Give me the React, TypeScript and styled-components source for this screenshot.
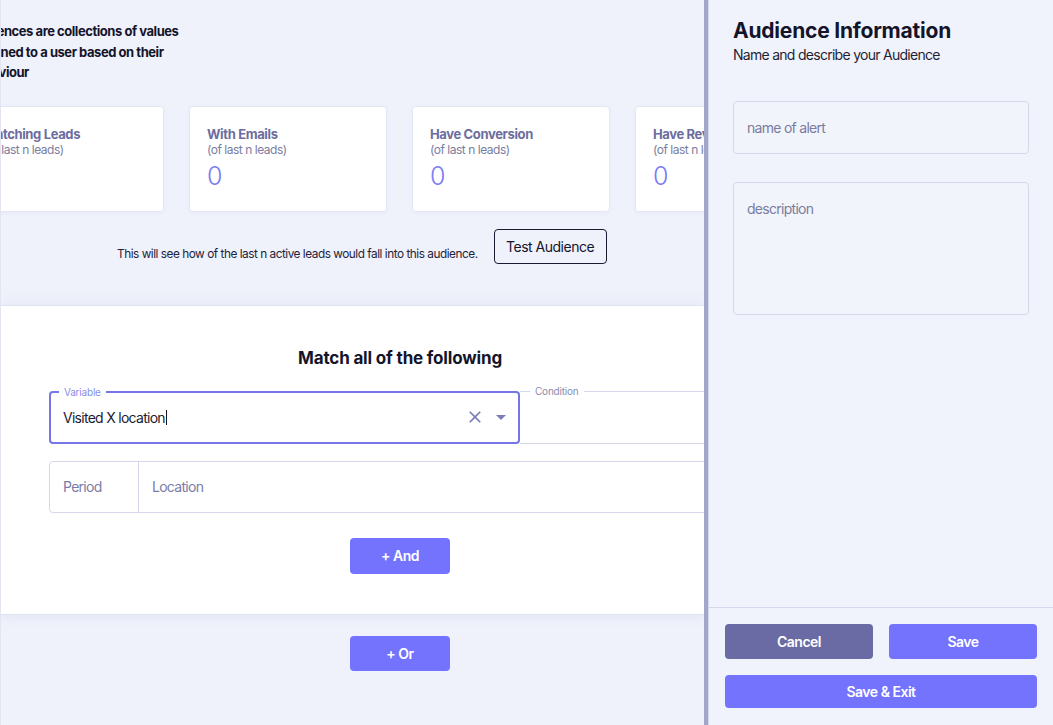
import React from "react";
import styled, { createGlobalStyle } from "styled-components";

const Global = createGlobalStyle`
  html, body, #root { margin: 0; padding: 0; height: 100%; }
  body {
    font-family: Inter, "Noto Sans", "Liberation Sans", sans-serif;
    background: #eff1fb;
    overflow: hidden;
    color: #14142b;
    letter-spacing: -0.045em;
  }
  * { box-sizing: border-box; }
`;

const Page = styled.div`
  display: flex;
  width: 1053px;
  height: 725px;
`;

const Main = styled.main`
  width: 704px;
  flex: none;
  height: 100%;
  overflow: hidden;
  display: flex;
  flex-direction: column;
  background: #eff1fb;
  border-left: 1px solid #e3e6f1;
`;

/* inner content is wider than the visible area and scrolled sideways */
const Inner = styled.div`
  width: 868px;
  margin-left: -35px;
  flex: none;
`;

const TopSection = styled.section`
  padding: 21px 0 41px;
`;

const Intro = styled.p`
  margin: 0 0 0 3px;
  font-size: 13px;
  font-weight: 700;
  line-height: 20.5px;
  letter-spacing: -0.035em;
  color: #14142b;
`;

const Cards = styled.div`
  display: grid;
  grid-template-columns: repeat(4, 198px);
  gap: 25px;
  margin-top: 23px;
`;

const Card = styled.div`
  height: 106px;
  background: #fff;
  border: 1px solid #e4e7f3;
  border-radius: 4px;
  padding: 19px 17px;
  box-shadow: 0 1px 4px rgba(90, 95, 150, 0.05);
  overflow: hidden;
  white-space: nowrap;
`;

const CardTitle = styled.div`
  font-size: 13px;
  font-weight: 700;
  line-height: 16px;
  letter-spacing: -0.028em;
  color: #6c6d9e;
`;

const CardSub = styled.div`
  font-size: 12px;
  line-height: 15px;
  letter-spacing: -0.04em;
  color: #7b7d9f;
`;

const CardValue = styled.div`
  margin-top: 5px;
  font-size: 25px;
  font-weight: 300;
  line-height: 28px;
  letter-spacing: 0;
  color: #7b7cf2;
`;

const TestRow = styled.div`
  display: flex;
  align-items: flex-end;
  gap: 16px;
  margin-top: 17px;
  padding-left: 151px;
`;

const TestText = styled.span`
  font-size: 11.8px;
  line-height: 15px;
  padding-bottom: 2px;
  letter-spacing: -0.04em;
  color: #23233a;
`;

const OutlineButton = styled.button`
  width: 113px;
  height: 35px;
  border: 1px solid #1c1c30;
  border-radius: 4px;
  background: transparent;
  font-family: inherit;
  font-size: 14px;
  letter-spacing: -0.035em;
  color: #14142b;
  cursor: pointer;
`;

const RulesSection = styled.section`
  background: #fff;
  border-top: 1px solid #e1e4f0;
  border-bottom: 1px solid #e1e4f0;
  box-shadow: 0 -6px 14px rgba(120, 125, 180, 0.04), 0 4px 10px rgba(120, 125, 180, 0.07);
`;

const RulesInner = styled(Inner)`
  padding: 41px 83px 40px;
  display: flex;
  flex-direction: column;
  align-items: center;
`;

const Heading = styled.h2`
  margin: 0;
  font-size: 17px;
  font-weight: 700;
  line-height: 22px;
  letter-spacing: -0.01em;
  color: #14142b;
`;

const FieldRow = styled.div`
  align-self: stretch;
  display: flex;
  margin-top: 22px;
`;

const Field = styled.div<{ $focused?: boolean; $width?: number }>`
  position: relative;
  height: 53px;
  ${(p) => (p.$width ? `width: ${p.$width}px; flex: none;` : "flex: 1;")}
  border: ${(p) => (p.$focused ? "2px solid #7676e6" : "1px solid #d5d8ea")};
  border-radius: ${(p) => (p.$focused ? "4px" : "0 4px 4px 0")};
  ${(p) => (p.$focused ? "" : "border-left: none;")}
  display: flex;
  align-items: center;
  padding: 0 5px 0 12px;
  z-index: ${(p) => (p.$focused ? 1 : 0)};
`;

const FieldLabel = styled.span<{ $focused?: boolean }>`
  position: absolute;
  top: -7px;
  left: ${(p) => (p.$focused ? "8px" : "10px")};
  padding: 0 5px;
  background: #fff;
  font-size: 10px;
  line-height: 12px;
  letter-spacing: -0.02em;
  color: ${(p) => (p.$focused ? "#8b8ce6" : "#8a8cae")};
`;

const FieldValue = styled.span`
  flex: 1;
  font-size: 14px;
  color: #1c1c30;
  display: flex;
  align-items: center;
`;

const Caret = styled.span`
  display: inline-block;
  width: 1px;
  height: 15px;
  background: #14142b;
  margin-left: 1px;
`;

const IconBtn = styled.span`
  display: inline-flex;
  align-items: center;
  justify-content: center;
  color: #7b7db8;
`;

const Icons = styled.div`
  display: flex;
  align-items: center;
  gap: 4px;
`;

const PeriodRow = styled.div`
  align-self: stretch;
  display: flex;
  height: 52px;
  margin-top: 17px;
  border: 1px solid #d5d8ea;
  border-radius: 4px;
`;

const PeriodCell = styled.div<{ $width?: number }>`
  ${(p) => (p.$width ? `width: ${p.$width}px; flex: none; border-right: 1px solid #d5d8ea;` : "flex: 1;")}
  display: flex;
  align-items: center;
  padding-left: 13px;
  font-size: 14px;
  color: #7a7ca6;
`;

const FillButton = styled.button<{ $variant?: "primary" | "muted"; $width?: number; $height?: number }>`
  width: ${(p) => (p.$width ? `${p.$width}px` : "100%")};
  height: ${(p) => p.$height ?? 36}px;
  border: none;
  border-radius: 4px;
  background: ${(p) => (p.$variant === "muted" ? "#6a6ba5" : "#7373fd")};
  color: #fff;
  font-family: inherit;
  font-size: 14px;
  font-weight: 600;
  letter-spacing: -0.035em;
  cursor: pointer;
`;

const AndWrap = styled.div`
  margin-top: 25px;
`;

const OrSection = styled(Inner)`
  display: flex;
  justify-content: center;
  padding-top: 21px;
`;

const Drawer = styled.aside`
  flex: 1;
  height: 100%;
  display: flex;
  flex-direction: column;
  background: #f1f3fc;
  border-left: 4px solid #a3a6cb;
  box-shadow: inset 1px 0 0 #d6d9ec;
`;

const DrawerBody = styled.div`
  flex: 1;
  padding: 18px 24px 0 25px;
`;

const DrawerTitle = styled.h1`
  margin: 0;
  font-size: 21px;
  font-weight: 700;
  line-height: 26px;
  letter-spacing: -0.01em;
  color: #14142b;
`;

const DrawerSub = styled.p`
  margin: 2px 0 0;
  font-size: 14px;
  line-height: 18px;
  color: #1f1f35;
`;

const TextInput = styled.div<{ $tall?: boolean }>`
  height: ${(p) => (p.$tall ? 133 : 53)}px;
  margin-top: ${(p) => (p.$tall ? 28 : 37)}px;
  border: 1px solid #d4d8ec;
  border-radius: 4px;
  background: #f2f4fc;
  padding: ${(p) => (p.$tall ? "17px 13px" : "0 13px")};
  display: flex;
  align-items: ${(p) => (p.$tall ? "flex-start" : "center")};
  font-size: 14px;
  line-height: 17px;
  color: #7a7c9e;
`;

const DrawerFooter = styled.div`
  border-top: 1px solid #d5d8ea;
  padding: 16px 16px 17px 17px;
  display: grid;
  grid-template-columns: 1fr 1fr;
  gap: 16px;
`;

const Wide = styled.div`
  grid-column: 1 / -1;
  display: flex;
`;

const CloseIcon = () => (
  <svg width="20" height="20" viewBox="0 0 24 24" fill="currentColor">
    <path d="M19 6.41 17.59 5 12 10.59 6.41 5 5 6.41 10.59 12 5 17.59 6.41 19 12 13.41 17.59 19 19 17.59 13.41 12z" />
  </svg>
);

const DropIcon = () => (
  <svg width="24" height="24" viewBox="0 0 24 24" fill="currentColor">
    <path d="M7 10l5 5 5-5z" />
  </svg>
);

const cards = [
  { title: "Matching Leads", value: "" },
  { title: "With Emails", value: "0" },
  { title: "Have Conversion", value: "0" },
  { title: "Have Revenue", value: "0" },
];

export default function App() {
  return (
    <>
      <Global />
      <Page>
        <Main>
          <TopSection>
            <Inner>
              <Intro>
                Audiences are collections of values
                <br />
                assigned to a user based on their
                <br />
                behaviour
              </Intro>
              <Cards>
                {cards.map((c) => (
                  <Card key={c.title}>
                    <CardTitle>{c.title}</CardTitle>
                    <CardSub>(of last n leads)</CardSub>
                    <CardValue>{c.value || "\u00a0"}</CardValue>
                  </Card>
                ))}
              </Cards>
              <TestRow>
                <TestText>This will see how of the last n active leads would fall into this audience.</TestText>
                <OutlineButton>Test Audience</OutlineButton>
              </TestRow>
            </Inner>
          </TopSection>
          <RulesSection>
            <RulesInner>
              <Heading>Match all of the following</Heading>
              <FieldRow>
                <Field $focused $width={471}>
                  <FieldLabel $focused>Variable</FieldLabel>
                  <FieldValue>
                    Visited X location
                    <Caret />
                  </FieldValue>
                  <Icons>
                    <IconBtn>
                      <CloseIcon />
                    </IconBtn>
                    <IconBtn>
                      <DropIcon />
                    </IconBtn>
                  </Icons>
                </Field>
                <Field>
                  <FieldLabel>Condition</FieldLabel>
                </Field>
              </FieldRow>
              <PeriodRow>
                <PeriodCell $width={89}>Period</PeriodCell>
                <PeriodCell>Location</PeriodCell>
              </PeriodRow>
              <AndWrap>
                <FillButton $width={100}>+ And</FillButton>
              </AndWrap>
            </RulesInner>
          </RulesSection>
          <OrSection>
            <FillButton $width={100} $height={35}>
              + Or
            </FillButton>
          </OrSection>
        </Main>
        <Drawer>
          <DrawerBody>
            <DrawerTitle>Audience Information</DrawerTitle>
            <DrawerSub>Name and describe your Audience</DrawerSub>
            <TextInput>name of alert</TextInput>
            <TextInput $tall>description</TextInput>
          </DrawerBody>
          <DrawerFooter>
            <FillButton $variant="muted" $height={35}>
              Cancel
            </FillButton>
            <FillButton $height={35}>Save</FillButton>
            <Wide>
              <FillButton $height={33}>Save &amp; Exit</FillButton>
            </Wide>
          </DrawerFooter>
        </Drawer>
      </Page>
    </>
  );
}
